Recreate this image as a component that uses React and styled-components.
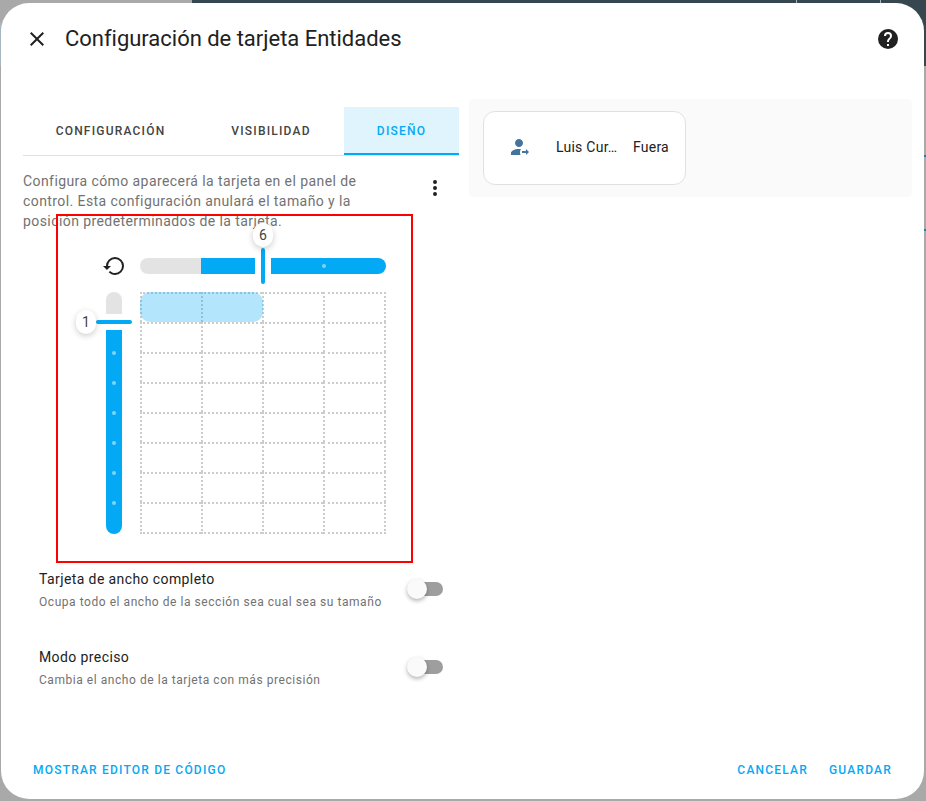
import React from 'react'
import styled, { createGlobalStyle } from 'styled-components'

const GlobalStyle = createGlobalStyle`
  html, body {
    margin: 0;
    padding: 0;
    background: #a9a9a9;
    font-family: Roboto, "Liberation Sans", sans-serif;
  }
  * {
    box-sizing: border-box;
  }
`

const mdiClose = 'M19,6.41L17.59,5L12,10.59L6.41,5L5,6.41L10.59,12L5,17.59L6.41,19L12,13.41L17.59,19L19,17.59L13.41,12L19,6.41Z'
const mdiHelpCircle = 'M15.07,11.25L14.17,12.17C13.45,12.89 13,13.5 13,15H11V14.5C11,13.39 11.45,12.39 12.17,11.67L13.41,10.41C13.78,10.05 14,9.55 14,9C14,7.89 13.1,7 12,7A2,2 0 0,0 10,9H8A4,4 0 0,1 12,5A4,4 0 0,1 16,9C16,9.88 15.64,10.67 15.07,11.25M13,19H11V17H13M12,2A10,10 0 0,0 2,12A10,10 0 0,0 12,22A10,10 0 0,0 22,12C22,6.47 17.5,2 12,2Z'
const mdiDotsVertical = 'M12,16A2,2 0 0,1 14,18A2,2 0 0,1 12,20A2,2 0 0,1 10,18A2,2 0 0,1 12,16M12,10A2,2 0 0,1 14,12A2,2 0 0,1 12,14A2,2 0 0,1 10,12A2,2 0 0,1 12,10M12,4A2,2 0 0,1 14,6A2,2 0 0,1 12,8A2,2 0 0,1 10,6A2,2 0 0,1 12,4Z'
const mdiRestore = 'M13,3A9,9 0 0,0 4,12H1L4.89,15.89L4.96,16.03L9,12H6A7,7 0 0,1 13,5A7,7 0 0,1 20,12A7,7 0 0,1 13,19C11.07,19 9.32,18.21 8.06,16.94L6.64,18.36C8.27,20 10.5,21 13,21A9,9 0 0,0 22,12A9,9 0 0,0 13,3Z'
const mdiAccountArrowRight = 'M18 16H14V18H18V20L21 17L18 14V16M11 4C8.8 4 7 5.8 7 8S8.8 12 11 12 15 10.2 15 8 13.2 4 11 4M11 14C6.6 14 3 15.8 3 18V20H12.5C12.2 19.2 12 18.4 12 17.5C12 16.3 12.3 15.2 12.9 14.1C12.3 14.1 11.7 14 11 14Z'

const BLUE = '#03a9f4'

const Page = styled.div`
  position: relative;
  width: 926px;
  height: 801px;
  padding: 3px 2px 2px 1px;
  overflow: hidden;
  background: #a9a9a9;
`

// bits of the dashboard that peek out behind the dialog
const AppBarStrip = styled.div`
  position: absolute;
  top: 0;
  left: 192px;
  right: 0;
  height: 3px;
  background: #37474f;
`

const AppBarCorner = styled.div`
  position: absolute;
  top: 0;
  right: 0;
  width: 46px;
  height: 66px;
  background: #37474f;
`

const AppBarEdge = styled.div`
  position: absolute;
  top: 22px;
  left: 0;
  width: 1px;
  height: 44px;
  background: #a8b7bf;
`

const AppBarTick = styled.div`
  position: absolute;
  top: 0;
  left: ${p => p.$x}px;
  width: 1px;
  height: 3px;
  background: #a9b4b9;
`

const EdgeMark = styled.div`
  position: absolute;
  top: ${p => p.$y}px;
  right: 0;
  width: 2px;
  height: 2px;
  background: #0288d1;
`

const Dialog = styled.div`
  position: relative;
  display: flex;
  flex-direction: column;
  width: 923px;
  height: 796px;
  background: #fff;
  border-radius: 28px;
  overflow: hidden;
`

const Header = styled.header`
  display: flex;
  align-items: center;
  gap: 16px;
  height: 72px;
  padding: 0 24px;
  color: #212121;
`

const Title = styled.h2`
  flex: 1;
  margin: 0 0 2px;
  font-size: 22px;
  font-weight: 400;
  letter-spacing: -0.02px;
  color: #212121;
`

const Svg = styled.svg`
  display: block;
  flex: none;
  width: ${p => p.$size || 24}px;
  height: ${p => p.$size || 24}px;
  fill: ${p => p.$color || '#212121'};
`

const Icon = ({ path, size, color }) => (
  <Svg viewBox="0 0 24 24" $size={size} $color={color}>
    <path d={path} />
  </Svg>
)

const Content = styled.div`
  flex: 1;
  display: grid;
  grid-template-columns: 436px 443px;
  column-gap: 10px;
  align-items: start;
  padding: 24px 0 0 22px;
`

const LeftColumn = styled.div`
  padding-top: 8px;
`

const Tabs = styled.div`
  display: grid;
  grid-template-columns: 175px 146px 115px;
  height: 49px;
  border-bottom: 1px solid #e0e0e0;
`

const Tab = styled.div`
  display: flex;
  align-items: center;
  justify-content: center;
  height: 48px;
  padding-top: 2px;
  font-size: 12px;
  font-weight: 500;
  letter-spacing: 1.2px;
  color: ${p => (p.$active ? BLUE : '#444')};
  background: ${p => (p.$active ? '#e0f4fd' : 'transparent')};
  border-bottom: 2px solid ${p => (p.$active ? BLUE : 'transparent')};
`

const Intro = styled.div`
  display: flex;
  justify-content: space-between;
  margin-top: 15px;
  padding-right: 12px;
`

const Description = styled.p`
  width: 350px;
  margin: 0;
  font-size: 14px;
  line-height: 20px;
  letter-spacing: 0.42px;
  color: #727272;
`

const MenuButton = styled.div`
  margin-top: 5px;
`

const Editor = styled.div`
  display: grid;
  grid-template-columns: 16px 246px;
  grid-template-rows: 16px 242px;
  gap: 18px;
  margin: 27px 0 33px 83px;
`

const ResetButton = styled.div`
  display: flex;
  align-items: center;
  justify-content: center;
`

const Slider = styled.div`
  display: flex;
  flex-direction: ${p => (p.$vertical ? 'column' : 'row')};
`

const RestTrack = styled.div`
  flex: none;
  width: ${p => (p.$vertical ? '16px' : '61px')};
  height: ${p => (p.$vertical ? '22px' : '16px')};
  background: #e3e3e3;
  border-radius: ${p => (p.$vertical ? '8px 8px 0 0' : '8px 0 0 8px')};
`

const FillTrack = styled.div`
  flex: ${p => (p.$size ? `0 0 ${p.$size}px` : 1)};
  display: flex;
  align-items: center;
  flex-direction: ${p => (p.$vertical ? 'column' : 'row')};
  gap: 26px;
  padding: ${p => p.$padding || 0};
  background: ${BLUE};
  border-radius: ${p => p.$radius || 0};
`

const TrackDot = styled.span`
  flex: none;
  width: 4px;
  height: 4px;
  border-radius: 50%;
  background: #81d4fa;
`

const HandleSlot = styled.div`
  position: relative;
  flex: none;
  width: 16px;
  height: 16px;
`

const HandleBar = styled.div`
  position: absolute;
  top: ${p => (p.$vertical ? '6px' : '-10px')};
  left: ${p => (p.$vertical ? '-10px' : '6px')};
  width: ${p => (p.$vertical ? '36px' : '4px')};
  height: ${p => (p.$vertical ? '4px' : '36px')};
  border-radius: 2px;
  background: ${BLUE};
`

const ValueBadge = styled.div`
  position: absolute;
  top: ${p => (p.$vertical ? '-4px' : '-35px')};
  left: ${p => (p.$vertical ? '-30px' : '-2px')};
  display: flex;
  align-items: center;
  justify-content: center;
  width: 20px;
  height: 24px;
  padding-bottom: 1px;
  font-size: 14px;
  color: #444;
  background: #fff;
  border-radius: 10px;
  box-shadow: 0 2px 6px rgba(0, 0, 0, 0.2);
`

const Grid = styled.div`
  position: relative;
  display: grid;
  grid-template-columns: repeat(3, 61px) 63px;
  grid-template-rows: repeat(7, 30px) 32px;
`

const Cell = styled.div`
  border-top: 2px dotted #ccc;
  border-left: 2px dotted #ccc;
  &:nth-of-type(4n) {
    border-right: 2px dotted #ccc;
  }
  &:nth-last-of-type(-n + 4) {
    border-bottom: 2px dotted #ccc;
  }
`

const Selection = styled.span`
  position: absolute;
  top: 0;
  left: 0;
  width: 123px;
  height: 30px;
  border-radius: 10px;
  background: rgba(3, 169, 244, 0.3);
`

const SettingRow = styled.div`
  display: flex;
  align-items: center;
  justify-content: space-between;
  height: 44px;
  margin-bottom: 34px;
  padding: 0 16px;
`

const SettingTitle = styled.div`
  font-size: 14px;
  line-height: 24px;
  letter-spacing: 0.4px;
  color: #212121;
`

const SettingHint = styled.div`
  margin-top: 2px;
  font-size: 12px;
  line-height: 18px;
  letter-spacing: 0.55px;
  color: #727272;
`

const Switch = styled.div`
  position: relative;
  flex: none;
  width: 36px;
  height: 14px;
  &::before {
    content: '';
    position: absolute;
    top: 0;
    right: 0;
    width: 28px;
    height: 14px;
    border-radius: 7px;
    background: #9e9e9e;
  }
  &::after {
    content: '';
    position: absolute;
    top: -3px;
    left: 0;
    width: 20px;
    height: 20px;
    border-radius: 50%;
    background: #fafafa;
    box-shadow: 0 2px 4px rgba(0, 0, 0, 0.3);
  }
`

const Preview = styled.div`
  height: 98px;
  padding: 12px 14px;
  border-radius: 4px;
  background: #fafafa;
`

const EntityCard = styled.div`
  display: flex;
  align-items: center;
  width: 203px;
  height: 74px;
  padding: 0 16px 2px 24px;
  background: #fff;
  border: 1px solid #e0e0e0;
  border-radius: 12px;
  font-size: 14px;
  letter-spacing: 0.25px;
  color: #212121;
`

const EntityName = styled.div`
  flex: 1;
  min-width: 0;
  margin-left: 24px;
  white-space: nowrap;
`

const Footer = styled.footer`
  display: flex;
  align-items: center;
  justify-content: space-between;
  height: 20px;
  margin-bottom: 19px;
  padding: 0 32px;
`

const FooterGroup = styled.div`
  display: flex;
  gap: 21px;
`

const TextButton = styled.div`
  font-size: 12px;
  font-weight: 500;
  letter-spacing: 1.2px;
  color: ${BLUE};
`

const Annotation = styled.div`
  position: absolute;
  top: 211px;
  left: 55px;
  width: 357px;
  height: 349px;
  border: 2px solid #f00;
  pointer-events: none;
`

const cells = Array.from({ length: 32 })
const verticalDots = Array.from({ length: 6 })

export default function App() {
  return (
    <Page>
      <GlobalStyle />
      <AppBarStrip />
      <AppBarCorner />
      <AppBarEdge />
      <AppBarTick $x={796} />
      <AppBarTick $x={880} />
      <EdgeMark $y={155} />
      <EdgeMark $y={229} />
      <Dialog>
        <Header>
          <Icon path={mdiClose} />
          <Title>Configuración de tarjeta Entidades</Title>
          <Icon path={mdiHelpCircle} />
        </Header>

        <Content>
          <LeftColumn>
            <Tabs>
              <Tab>CONFIGURACIÓN</Tab>
              <Tab>VISIBILIDAD</Tab>
              <Tab $active>DISEÑO</Tab>
            </Tabs>

            <Intro>
              <Description>
                Configura cómo aparecerá la tarjeta en el panel de control. Esta configuración anulará el tamaño y la posición predeterminados de la tarjeta.
              </Description>
              <MenuButton>
                <Icon path={mdiDotsVertical} />
              </MenuButton>
            </Intro>

            <Editor>
              <ResetButton>
                <Icon path={mdiRestore} />
              </ResetButton>

              <Slider>
                <RestTrack />
                <FillTrack $size={54} />
                <HandleSlot>
                  <HandleBar />
                  <ValueBadge>6</ValueBadge>
                </HandleSlot>
                <FillTrack $radius="0 8px 8px 0" $padding="0 0 0 51px">
                  <TrackDot />
                </FillTrack>
              </Slider>

              <Slider $vertical>
                <RestTrack $vertical />
                <HandleSlot>
                  <HandleBar $vertical />
                  <ValueBadge $vertical>1</ValueBadge>
                </HandleSlot>
                <FillTrack $vertical $radius="0 0 8px 8px" $padding="21px 0 0">
                  {verticalDots.map((_, i) => <TrackDot key={i} />)}
                </FillTrack>
              </Slider>

              <Grid>
                {cells.map((_, i) => <Cell key={i} />)}
                <Selection />
              </Grid>
            </Editor>

            <SettingRow>
              <div>
                <SettingTitle>Tarjeta de ancho completo</SettingTitle>
                <SettingHint>Ocupa todo el ancho de la sección sea cual sea su tamaño</SettingHint>
              </div>
              <Switch />
            </SettingRow>

            <SettingRow>
              <div>
                <SettingTitle>Modo preciso</SettingTitle>
                <SettingHint>Cambia el ancho de la tarjeta con más precisión</SettingHint>
              </div>
              <Switch />
            </SettingRow>
          </LeftColumn>

          <Preview>
            <EntityCard>
              <Icon path={mdiAccountArrowRight} color="#44739e" />
              <EntityName>Luis Cur…</EntityName>
              <span>Fuera</span>
            </EntityCard>
          </Preview>
        </Content>

        <Footer>
          <TextButton>MOSTRAR EDITOR DE CÓDIGO</TextButton>
          <FooterGroup>
            <TextButton>CANCELAR</TextButton>
            <TextButton>GUARDAR</TextButton>
          </FooterGroup>
        </Footer>

        <Annotation />
      </Dialog>
    </Page>
  )
}
